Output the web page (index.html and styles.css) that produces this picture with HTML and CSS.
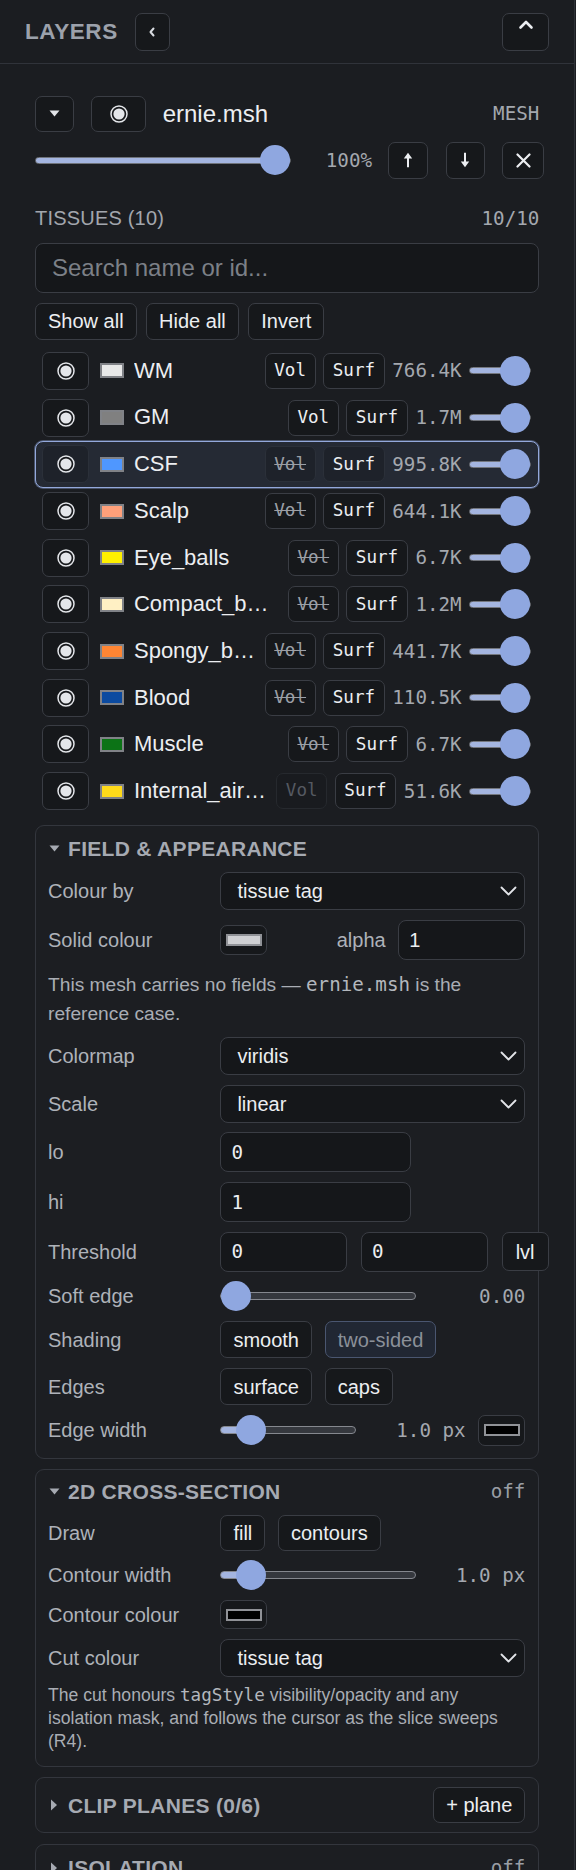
FILE: index.html
```html
<!DOCTYPE html>
<html lang="en">
<head>
<meta charset="utf-8">
<title>Layers</title>
<link rel="stylesheet" href="styles.css">
</head>
<body>
<svg class="sprite" aria-hidden="true" xmlns="http://www.w3.org/2000/svg">
  <symbol id="i-radio" viewBox="0 0 18 18"><circle cx="9" cy="9" r="8" fill="#16181b" stroke="currentColor" stroke-width="1.5"/><circle cx="9" cy="9" r="5.6" fill="currentColor"/></symbol>
  <symbol id="i-chev-left" viewBox="0 0 8 10"><polyline points="5.5,1.5 2.5,5 5.5,8.5" fill="none" stroke="currentColor" stroke-width="2" stroke-linecap="round" stroke-linejoin="round"/></symbol>
  <symbol id="i-caret-up" viewBox="0 0 16 18"><polyline points="2.5,8.5 8,3 13.5,8.5" fill="none" stroke="currentColor" stroke-width="2.6" stroke-linecap="round" stroke-linejoin="round"/></symbol>
  <symbol id="i-tri-down" viewBox="0 0 13 9"><polygon points="1.5,1.5 11.5,1.5 6.5,7.5" fill="currentColor"/></symbol>
  <symbol id="i-tri-right" viewBox="0 0 13 14"><polygon points="3,1.5 9,7 3,12.5" fill="currentColor"/></symbol>
  <symbol id="i-arrow-up" viewBox="0 0 10 16"><path d="M5 0.8 L9.2 6.4 H6 V15.2 H4 V6.4 H0.8 Z" fill="currentColor"/></symbol>
  <symbol id="i-arrow-down" viewBox="0 0 10 16"><path d="M5 15.2 L9.2 9.6 H6 V0.8 H4 V9.6 H0.8 Z" fill="currentColor"/></symbol>
  <symbol id="i-close" viewBox="0 0 15 15"><path d="M1.5 1.5 L13.5 13.5 M13.5 1.5 L1.5 13.5" fill="none" stroke="currentColor" stroke-width="2.2" stroke-linecap="round"/></symbol>
  <symbol id="i-chev-down" viewBox="0 0 17 10"><polyline points="1.5,1.5 8.5,8.5 15.5,1.5" fill="none" stroke="currentColor" stroke-width="1.8" stroke-linecap="round" stroke-linejoin="round"/></symbol>
</svg>

<aside class="panel">
  <header class="panel-head">
    <h2 class="panel-title">Layers</h2>
    <button class="btn icon-btn btn-collapse" title="Collapse"><svg width="8" height="10"><use href="#i-chev-left"/></svg></button>
    <button class="btn icon-btn btn-fold" title="Fold"><svg width="16" height="18"><use href="#i-caret-up"/></svg></button>
  </header>

  <div class="panel-body">
    <section class="layer">
      <div class="layer-row">
        <button class="btn icon-btn btn-expand"><svg width="13" height="9"><use href="#i-tri-down"/></svg></button>
        <button class="btn icon-btn btn-eye"><svg width="18" height="18"><use href="#i-radio"/></svg></button>
        <span class="layer-name">ernie.msh</span>
        <span class="layer-kind">MESH</span>
      </div>
      <div class="layer-ctrl">
        <input class="range range-wide" type="range" min="0" max="100" value="100" style="--p:100%">
        <span class="layer-pct">100%</span>
        <button class="btn icon-btn btn-up"><svg width="10" height="16"><use href="#i-arrow-up"/></svg></button>
        <button class="btn icon-btn btn-down"><svg width="10" height="16"><use href="#i-arrow-down"/></svg></button>
        <button class="btn icon-btn btn-remove"><svg width="15" height="15"><use href="#i-close"/></svg></button>
      </div>
    </section>

    <div class="tissue-head">
      <span class="tissue-title">Tissues (10)</span>
      <span class="tissue-total">10/10</span>
    </div>
    <input class="search" type="search" placeholder="Search name or id...">
    <div class="bulk-row">
      <button class="btn">Show all</button>
      <button class="btn">Hide all</button>
      <button class="btn">Invert</button>
    </div>

    <ul class="tissues">
      <li class="tissue">
        <button class="btn icon-btn vis-btn"><svg width="18" height="18"><use href="#i-radio"/></svg></button>
        <span class="swatch" style="background:#e8e8e8"></span>
        <span class="tissue-name">WM</span>
        <button class="btn chip">Vol</button>
        <button class="btn chip">Surf</button>
        <span class="count">766.4K</span>
        <input class="range range-mini" type="range" min="0" max="100" value="100" style="--p:100%">
      </li>
      <li class="tissue">
        <button class="btn icon-btn vis-btn"><svg width="18" height="18"><use href="#i-radio"/></svg></button>
        <span class="swatch" style="background:#808080"></span>
        <span class="tissue-name">GM</span>
        <button class="btn chip">Vol</button>
        <button class="btn chip">Surf</button>
        <span class="count">1.7M</span>
        <input class="range range-mini" type="range" min="0" max="100" value="100" style="--p:100%">
      </li>
      <li class="tissue is-selected">
        <button class="btn icon-btn vis-btn"><svg width="18" height="18"><use href="#i-radio"/></svg></button>
        <span class="swatch" style="background:#4f97ff"></span>
        <span class="tissue-name">CSF</span>
        <button class="btn chip is-off">Vol</button>
        <button class="btn chip">Surf</button>
        <span class="count">995.8K</span>
        <input class="range range-mini" type="range" min="0" max="100" value="100" style="--p:100%">
      </li>
      <li class="tissue">
        <button class="btn icon-btn vis-btn"><svg width="18" height="18"><use href="#i-radio"/></svg></button>
        <span class="swatch" style="background:#ffa07a"></span>
        <span class="tissue-name">Scalp</span>
        <button class="btn chip is-off">Vol</button>
        <button class="btn chip">Surf</button>
        <span class="count">644.1K</span>
        <input class="range range-mini" type="range" min="0" max="100" value="100" style="--p:100%">
      </li>
      <li class="tissue">
        <button class="btn icon-btn vis-btn"><svg width="18" height="18"><use href="#i-radio"/></svg></button>
        <span class="swatch" style="background:#fff000"></span>
        <span class="tissue-name">Eye_balls</span>
        <button class="btn chip is-off">Vol</button>
        <button class="btn chip">Surf</button>
        <span class="count">6.7K</span>
        <input class="range range-mini" type="range" min="0" max="100" value="100" style="--p:100%">
      </li>
      <li class="tissue">
        <button class="btn icon-btn vis-btn"><svg width="18" height="18"><use href="#i-radio"/></svg></button>
        <span class="swatch" style="background:#fff0c4"></span>
        <span class="tissue-name">Compact_bone</span>
        <button class="btn chip is-off">Vol</button>
        <button class="btn chip">Surf</button>
        <span class="count">1.2M</span>
        <input class="range range-mini" type="range" min="0" max="100" value="100" style="--p:100%">
      </li>
      <li class="tissue">
        <button class="btn icon-btn vis-btn"><svg width="18" height="18"><use href="#i-radio"/></svg></button>
        <span class="swatch" style="background:#ff8533"></span>
        <span class="tissue-name">Spongy_bone</span>
        <button class="btn chip is-off">Vol</button>
        <button class="btn chip">Surf</button>
        <span class="count">441.7K</span>
        <input class="range range-mini" type="range" min="0" max="100" value="100" style="--p:100%">
      </li>
      <li class="tissue">
        <button class="btn icon-btn vis-btn"><svg width="18" height="18"><use href="#i-radio"/></svg></button>
        <span class="swatch" style="background:#0b4aa0"></span>
        <span class="tissue-name">Blood</span>
        <button class="btn chip is-off">Vol</button>
        <button class="btn chip">Surf</button>
        <span class="count">110.5K</span>
        <input class="range range-mini" type="range" min="0" max="100" value="100" style="--p:100%">
      </li>
      <li class="tissue">
        <button class="btn icon-btn vis-btn"><svg width="18" height="18"><use href="#i-radio"/></svg></button>
        <span class="swatch" style="background:#0c7316"></span>
        <span class="tissue-name">Muscle</span>
        <button class="btn chip is-off">Vol</button>
        <button class="btn chip">Surf</button>
        <span class="count">6.7K</span>
        <input class="range range-mini" type="range" min="0" max="100" value="100" style="--p:100%">
      </li>
      <li class="tissue">
        <button class="btn icon-btn vis-btn"><svg width="18" height="18"><use href="#i-radio"/></svg></button>
        <span class="swatch" style="background:#ffda1a"></span>
        <span class="tissue-name">Internal_air_cavity</span>
        <button class="btn chip is-na" disabled>Vol</button>
        <button class="btn chip">Surf</button>
        <span class="count">51.6K</span>
        <input class="range range-mini" type="range" min="0" max="100" value="100" style="--p:100%">
      </li>
    </ul>

    <section class="card">
      <header class="card-head">
        <svg class="tri" width="13" height="9"><use href="#i-tri-down"/></svg>
        <h3 class="card-title">Field &amp; appearance</h3>
      </header>
      <div class="field">
        <label class="field-label">Colour by</label>
        <div class="select"><select><option>tissue tag</option></select><svg class="chev" width="17" height="10"><use href="#i-chev-down"/></svg></div>
      </div>
      <div class="field">
        <label class="field-label">Solid colour</label>
        <div class="ctrl">
          <button class="btn swatch-btn"><span class="swatch-fill" style="background:#cfd0d3"></span></button>
          <label class="inline-label">alpha</label>
          <input class="input input-alpha" type="text" value="1">
        </div>
      </div>
      <p class="note">This mesh carries no fields — <code>ernie.msh</code> is the reference case.</p>
      <div class="field">
        <label class="field-label">Colormap</label>
        <div class="select"><select><option>viridis</option></select><svg class="chev" width="17" height="10"><use href="#i-chev-down"/></svg></div>
      </div>
      <div class="field">
        <label class="field-label">Scale</label>
        <div class="select"><select><option>linear</option></select><svg class="chev" width="17" height="10"><use href="#i-chev-down"/></svg></div>
      </div>
      <div class="field">
        <label class="field-label">lo</label>
        <div class="ctrl"><input class="input input-mono input-lohi" type="text" value="0"></div>
      </div>
      <div class="field">
        <label class="field-label">hi</label>
        <div class="ctrl"><input class="input input-mono input-lohi" type="text" value="1"></div>
      </div>
      <div class="field">
        <label class="field-label">Threshold</label>
        <div class="ctrl ctrl-threshold">
          <input class="input input-mono input-thr" type="text" value="0">
          <input class="input input-mono input-thr" type="text" value="0">
          <button class="btn btn-lvl">lvl</button>
        </div>
      </div>
      <div class="field">
        <label class="field-label">Soft edge</label>
        <div class="ctrl">
          <input class="range range-flex" type="range" min="0" max="1" step="0.01" value="0" style="--p:0%">
          <span class="value">0.00</span>
        </div>
      </div>
      <div class="field">
        <label class="field-label">Shading</label>
        <div class="ctrl">
          <button class="btn">smooth</button>
          <button class="btn is-pressed">two-sided</button>
        </div>
      </div>
      <div class="field">
        <label class="field-label">Edges</label>
        <div class="ctrl">
          <button class="btn">surface</button>
          <button class="btn">caps</button>
        </div>
      </div>
      <div class="field">
        <label class="field-label">Edge width</label>
        <div class="ctrl">
          <input class="range range-flex" type="range" min="0.5" max="4" step="0.5" value="1" style="--p:23%">
          <span class="value">1.0 px</span>
          <button class="btn swatch-btn"><span class="swatch-fill" style="background:#000000"></span></button>
        </div>
      </div>
    </section>

    <section class="card card-cut">
      <header class="card-head">
        <svg class="tri" width="13" height="9"><use href="#i-tri-down"/></svg>
        <h3 class="card-title">2D cross-section</h3>
        <span class="card-state">off</span>
      </header>
      <div class="field">
        <label class="field-label">Draw</label>
        <div class="ctrl">
          <button class="btn btn-sm">fill</button>
          <button class="btn btn-sm">contours</button>
        </div>
      </div>
      <div class="field">
        <label class="field-label">Contour width</label>
        <div class="ctrl">
          <input class="range range-flex" type="range" min="0.5" max="6" step="0.5" value="1" style="--p:16%">
          <span class="value">1.0 px</span>
        </div>
      </div>
      <div class="field">
        <label class="field-label">Contour colour</label>
        <div class="ctrl"><button class="btn swatch-btn"><span class="swatch-fill" style="background:#000000"></span></button></div>
      </div>
      <div class="field">
        <label class="field-label">Cut colour</label>
        <div class="select"><select><option>tissue tag</option></select><svg class="chev" width="17" height="10"><use href="#i-chev-down"/></svg></div>
      </div>
      <p class="note note-sm">The cut honours <code>tagStyle</code> visibility/opacity and any isolation mask, and follows the cursor as the slice sweeps (R4).</p>
    </section>

    <section class="card card-collapsed">
      <header class="card-head">
        <svg class="tri" width="13" height="14"><use href="#i-tri-right"/></svg>
        <h3 class="card-title">Clip planes (0/6)</h3>
        <button class="btn btn-plane">+ plane</button>
      </header>
    </section>

    <section class="card card-collapsed">
      <header class="card-head">
        <svg class="tri" width="13" height="14"><use href="#i-tri-right"/></svg>
        <h3 class="card-title">Isolation</h3>
        <span class="card-state">off</span>
      </header>
    </section>
  </div>
</aside>
</body>
</html>
```

FILE: styles.css
```css
* { box-sizing: border-box; }

html, body {
  margin: 0;
  background: #1b1d21;
}

body {
  font-family: "Liberation Sans", Arial, sans-serif;
  color: #eceef1;
  line-height: 1.2;
}

.sprite {
  position: absolute;
  width: 0;
  height: 0;
  overflow: hidden;
}

/* ---------- panel frame ---------- */
.panel {
  width: 575px;
  height: 1870px;
  border-right: 1px solid #2e3137;
  background: #1b1d21;
  overflow: hidden;
}

.panel-head {
  height: 64px;
  border-bottom: 1px solid #30333a;
  display: flex;
  align-items: center;
  gap: 17px;
  padding: 0 25px;
}

.panel-title {
  margin: 0;
  font-size: 22.5px;
  font-weight: 700;
  letter-spacing: 0.6px;
  text-transform: uppercase;
  color: #9ca1ab;
}

.panel-body {
  padding: 31.7px 34.7px 0 35px;
}

/* ---------- buttons ---------- */
button { font: inherit; color: inherit; }

.btn {
  display: inline-flex;
  align-items: center;
  justify-content: center;
  flex: none;
  height: 37.5px;
  padding: 0 12px;
  border: 1px solid #3a3d44;
  border-radius: 7px;
  background: #16181b;
  color: #eceef1;
  font-size: 20px;
  line-height: 1;
  cursor: pointer;
}

.icon-btn { padding: 0; }
.icon-btn svg { display: block; }

.btn-collapse { width: 35px; height: 38px; color: #d9dce1; }
.btn-fold { width: 47px; height: 38px; margin-left: auto; color: #eceef1; }
.btn-fold svg { margin-top: -8px; }

/* ---------- mesh layer ---------- */
.layer-row {
  display: flex;
  align-items: center;
  height: 36.6px;
}

.btn-expand { width: 39px; height: 36.6px; color: #e2e5e9; }
.btn-eye { width: 55.7px; height: 36.6px; margin-left: 16.7px; color: #e4e6ea; }

.layer-name {
  margin-left: 16.3px;
  font-size: 24px;
  color: #eceef1;
}

.layer-kind {
  margin-left: auto;
  font-family: "DejaVu Sans Mono", "Liberation Mono", monospace;
  font-size: 19.2px;
  color: #a4a8af;
}

.layer-ctrl {
  display: flex;
  align-items: center;
  height: 37.6px;
  margin-top: 9.4px;
  margin-right: -4.7px;
}

.layer-pct {
  width: 68px;
  margin-left: 13px;
  text-align: right;
  font-family: "DejaVu Sans Mono", "Liberation Mono", monospace;
  font-size: 19.2px;
  color: #a4a8af;
}

.layer-ctrl .icon-btn { height: 37.6px; color: #eceef1; }
.btn-up { width: 40px; margin-left: 16px; }
.btn-down { width: 39px; margin-left: 17.5px; }
.btn-remove { width: 42px; margin-left: 17.5px; }

/* ---------- range sliders ---------- */
.range {
  -webkit-appearance: none;
  appearance: none;
  display: block;
  height: 30px;
  margin: 0;
  padding: 0;
  background: transparent;
}

.range::-webkit-slider-runnable-track {
  height: 8px;
  border: 1px solid #85888f;
  border-radius: 4px;
  background: linear-gradient(to right, #a4b5e0 var(--p, 0%), #35383e var(--p, 0%));
}

.range::-webkit-slider-thumb {
  -webkit-appearance: none;
  width: 30px;
  height: 30px;
  margin-top: -12px;
  border: none;
  border-radius: 50%;
  background: #8fa7e0;
}

.range-wide { flex: 1; min-width: 0; }
.range-wide::-webkit-slider-runnable-track { height: 7px; border-color: #6f737a; }
.range-wide::-webkit-slider-thumb { margin-top: -12.5px; }

.range-mini { width: 62px; flex: none; }
.range-mini::-webkit-slider-runnable-track { height: 7px; border-color: #74777e; }
.range-mini::-webkit-slider-thumb { margin-top: -12.5px; }

.range-flex { flex: 1; min-width: 0; }

/* ---------- tissues ---------- */
.tissue-head {
  display: flex;
  justify-content: space-between;
  align-items: center;
  height: 24px;
  margin-top: 27px;
}

.tissue-title {
  font-size: 20px;
  letter-spacing: 0.2px;
  text-transform: uppercase;
  color: #a2a6ad;
}

.tissue-total {
  font-family: "DejaVu Sans Mono", "Liberation Mono", monospace;
  font-size: 19.2px;
  color: #a4a8af;
}

.search {
  display: block;
  width: 100%;
  height: 50.3px;
  margin: 12.4px 0 0;
  padding: 0 16px;
  border: 1px solid #3a3d44;
  border-radius: 8px;
  background: #15171a;
  color: #eceef1;
  font: 24px "Liberation Sans", Arial, sans-serif;
  outline: none;
}

.search::placeholder { color: #7c8087; }

.bulk-row {
  display: flex;
  gap: 9.5px;
  margin-top: 9.7px;
}

.bulk-row .btn { height: 37.3px; }

.tissues {
  list-style: none;
  margin: 7.7px 0 0;
  padding: 0;
}

.tissue {
  display: flex;
  align-items: center;
  gap: 7.7px;
  height: 46.7px;
  padding: 0 7px 0 6px;
  border: 1px solid transparent;
  border-radius: 8px;
}

.tissue.is-selected {
  background: #252a34;
  border-color: #93a8db;
  box-shadow: 0 0 0 1px rgba(143, 164, 216, 0.4);
}

.vis-btn { width: 47px; height: 38px; color: #e4e6ea; }

.swatch {
  flex: none;
  width: 24px;
  height: 15px;
  margin-left: 3.3px;
  border: 2px solid #808287;
}

.tissue-name {
  flex: 1;
  min-width: 0;
  margin-left: 2.3px;
  font-size: 22px;
  white-space: nowrap;
  overflow: hidden;
  text-overflow: ellipsis;
  color: #eceef1;
}

.chip {
  height: 36px;
  padding: 0 8.5px;
  font-family: "DejaVu Sans Mono", "Liberation Mono", monospace;
  font-size: 17.6px;
}

.chip.is-off {
  color: #9b9fa6;
  text-decoration: line-through;
}

.chip.is-na {
  color: #555961;
  border-color: #26292e;
  background: #191b1f;
}

.count {
  flex: none;
  font-family: "DejaVu Sans Mono", "Liberation Mono", monospace;
  font-size: 19.2px;
  color: #a4a8af;
}

.tissue.is-selected .btn {
  background: #1e222a;
  border-color: #2b3039;
}

/* ---------- section cards ---------- */
.card {
  display: flex;
  flex-direction: column;
  gap: 9.6px;
  margin-top: 10.4px;
  padding: 9px 13px 12px 12px;
  border: 1px solid #33363d;
  border-radius: 9px;
  background: #1c1e22;
}

.card-collapsed { padding-bottom: 9px; }

.card-head {
  display: flex;
  align-items: center;
  gap: 7px;
  min-height: 28px;
}

.card-cut .card-head { min-height: 26px; }

.tri { flex: none; color: #a6aab2; display: block; }

.card-title {
  margin: 0;
  font-size: 21px;
  font-weight: 700;
  letter-spacing: 0.3px;
  text-transform: uppercase;
  color: #a6aab2;
}

.card-state {
  margin-left: auto;
  font-family: "DejaVu Sans Mono", "Liberation Mono", monospace;
  font-size: 19.2px;
  color: #9a9ea5;
}

.btn-plane { margin-left: auto; height: 36.5px; }

.field {
  display: grid;
  grid-template-columns: 160px 1fr;
  column-gap: 12.4px;
  align-items: center;
}

.field-label {
  font-size: 20px;
  color: #aeb2b9;
}

.ctrl {
  display: flex;
  align-items: center;
  gap: 12.7px;
}

.select { position: relative; }

.select select {
  -webkit-appearance: none;
  appearance: none;
  display: block;
  width: 100%;
  height: 38px;
  padding: 0 40px 0 16px;
  border: 1px solid #3a3d44;
  border-radius: 8px;
  background: #15171a;
  color: #eceef1;
  font: 20px "Liberation Sans", Arial, sans-serif;
}

.select .chev {
  position: absolute;
  right: 8px;
  top: 50%;
  margin-top: -5px;
  color: #e2e4e8;
  pointer-events: none;
}

.input {
  height: 40px;
  padding: 0 10px;
  border: 1px solid #3a3d44;
  border-radius: 8px;
  background: #15171a;
  color: #eceef1;
  font: 20px "Liberation Sans", Arial, sans-serif;
  outline: none;
}

.input-mono {
  font-family: "DejaVu Sans Mono", "Liberation Mono", monospace;
  font-size: 19.2px;
}

.inline-label {
  margin-left: auto;
  font-size: 20px;
  color: #aeb2b9;
}

.input-alpha { width: 127px; }
.input-lohi { width: 191px; }
.input-thr { width: 127px; flex: none; }

.ctrl-threshold { gap: 13.6px; }
.btn-lvl { width: 47px; height: 39px; padding: 0; }

.swatch-btn {
  width: 47px;
  height: 30.5px;
  padding: 0;
}

.card-cut .swatch-btn { height: 29.5px; }

.swatch-fill {
  display: block;
  width: 36px;
  height: 12px;
  border: 2px solid #909297;
}

.value {
  flex: none;
  width: 96.5px;
  text-align: right;
  font-family: "DejaVu Sans Mono", "Liberation Mono", monospace;
  font-size: 19.2px;
  color: #a4a8af;
}

.btn.is-pressed {
  background: #212733;
  border-color: #4a5670;
  color: #8b9099;
}

.btn-sm { height: 36.3px; }

.note {
  margin: 0;
  font-size: 19.2px;
  line-height: 29px;
  color: #a9adb4;
}

.note code {
  font-family: "DejaVu Sans Mono", "Liberation Mono", monospace;
  font-size: 19.2px;
  color: #b3b7bd;
}

.note-sm {
  margin-top: -3px;
  font-size: 17.6px;
  line-height: 23.3px;
}

.note-sm code { font-size: 17.6px; line-height: 1; }
```
